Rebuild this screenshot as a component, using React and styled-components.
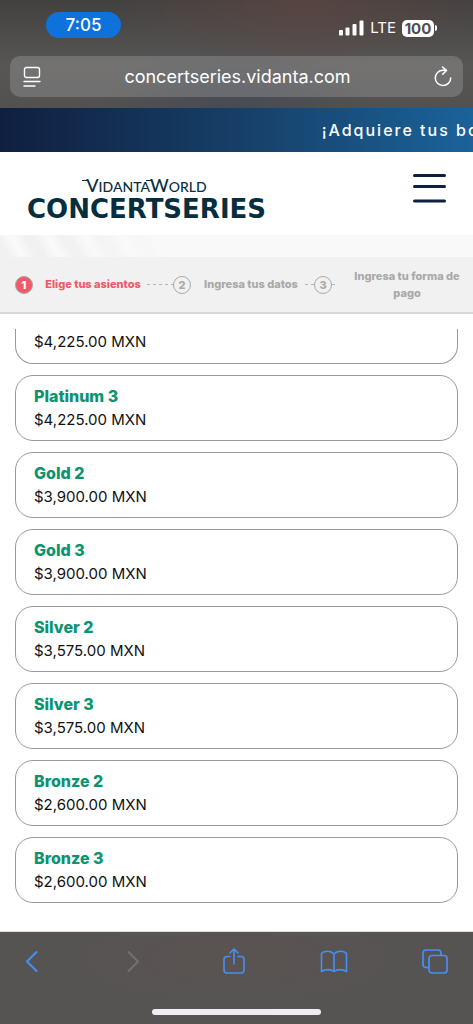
import React from "react";
import styled, { createGlobalStyle } from "styled-components";

const GlobalStyle = createGlobalStyle`
  * {
    box-sizing: border-box;
  }

  body {
    margin: 0;
    background: #ffffff;
    font-family: Inter, "Noto Sans", sans-serif;
  }

  button {
    border: 0;
    padding: 0;
    background: none;
    font: inherit;
    color: inherit;
  }
`;

const Screen = styled.div`
  display: flex;
  flex-direction: column;
  min-height: 100vh;
  overflow: hidden;
`;

const BrowserTop = styled.div`
  padding: 12px 10px 11px;
  color: #ffffff;
  background:
    radial-gradient(ellipse at 65% 0%, rgba(100, 70, 66, 0.6), transparent 45%),
    radial-gradient(ellipse at 50% 100%, rgba(66, 72, 84, 0.7), transparent 40%),
    linear-gradient(#424140, #575655 60%, #525150);
`;

const StatusBar = styled.div`
  display: flex;
  justify-content: space-between;
  align-items: flex-start;
  height: 44px;
  padding: 0 26px 0 36px;
`;

const Clock = styled.div`
  width: 75px;
  border-radius: 13px;
  background: #0d72d9;
  font-size: 17px;
  font-weight: 500;
  line-height: 26px;
  text-align: center;
`;

const Signals = styled.div`
  display: flex;
  align-items: center;
  gap: 6px;
  padding-top: 6px;
  font-size: 15px;
  line-height: 20px;
`;

const Battery = styled.div`
  display: flex;
  align-items: center;
  gap: 1px;
`;

const BatteryLevel = styled.span`
  width: 32px;
  border-radius: 5px;
  background: #ffffff;
  color: #504e4d;
  font-size: 15px;
  font-weight: 700;
  line-height: 17px;
  text-align: center;
`;

const BatteryTip = styled.span`
  width: 2px;
  height: 6px;
  border-radius: 0 2px 2px 0;
  background: #ffffff;
`;

const AddressBar = styled.div`
  display: flex;
  align-items: center;
  justify-content: space-between;
  height: 41px;
  padding: 0 11px 0 13px;
  border-radius: 10px;
  background: rgba(255, 255, 255, 0.17);
`;

const Address = styled.button`
  flex: 1;
  font-size: 18px;
  line-height: 24px;
`;

const IconButton = styled.button`
  display: flex;
`;

const Banner = styled.div`
  height: 44px;
  padding-left: 68%;
  overflow: hidden;
  background: linear-gradient(90deg, #101f40, #163f67 50%, #1b6299);
  color: #ffffff;
  font-size: 16px;
  font-weight: 500;
  line-height: 44px;
  letter-spacing: 2px;
  white-space: nowrap;
`;

const Header = styled.header`
  display: flex;
  justify-content: space-between;
  align-items: flex-start;
  height: 83px;
  padding: 22px 27px 0;
`;

const Logo = styled.a`
  display: flex;
  flex-direction: column;
  align-items: center;
  color: #062e3f;
  text-decoration: none;
`;

const LogoWorld = styled.span`
  font-family: Lato, sans-serif;
  font-size: 14px;
  font-weight: 500;
  line-height: 22px;
`;

// Tall capital with a short bar running into its top left arm
const LogoTall = styled.span`
  position: relative;
  font-size: 18px;

  &::before {
    content: "";
    position: absolute;
    top: 6px;
    left: -4px;
    width: 6px;
    height: 1px;
    background: currentColor;
  }
`;

const LogoSeries = styled.span`
  font-family: "DejaVu Sans", sans-serif;
  font-size: 26px;
  font-weight: 700;
  line-height: 22px;
`;

const Strip = styled.div`
  height: 22px;
  background:
    linear-gradient(90deg, transparent 60px, #f9f9f9 170px),
    repeating-linear-gradient(60deg, #f1f1f1 0 8px, #f9f9f9 18px 22px, #f1f1f1 32px);
`;

const Steps = styled.ol`
  display: flex;
  align-items: center;
  height: 57px;
  margin: 0;
  padding: 0 9px 0 15px;
  border-bottom: 2px solid #d8d8d8;
  background: #f1f1f1;
  list-style: none;
`;

const Step = styled.li`
  display: flex;
  align-items: center;
  flex: ${(p) => p.$grow};
  color: ${(p) => (p.$active ? "#ee5a68" : "#a9a9a9")};
  font-size: 11px;
  font-weight: 800;
  line-height: 17px;
`;

const StepNumber = styled.span`
  flex: none;
  width: 18px;
  height: 18px;
  border: 1px solid #a9a9a9;
  border-radius: 50%;
  background: ${(p) => (p.$active ? "#ee5a68" : "transparent")};
  color: ${(p) => (p.$active ? "#ffffff" : "#a9a9a9")};
  line-height: 16px;
  text-align: center;
`;

const StepLabel = styled.span`
  flex: none;
  width: ${(p) => (p.$last ? "114px" : "108px")};
  margin-left: ${(p) => (p.$last ? "auto" : "6px")};
  text-align: center;
`;

const StepLine = styled.span`
  flex: ${(p) => (p.$short ? "0 0 5px" : "1")};
  height: 1px;
  background: repeating-linear-gradient(90deg, #b5b5b5 0 3px, transparent 3px 6px);
`;

const ZoneList = styled.ul`
  display: flex;
  flex-direction: column;
  flex: 1;
  gap: 11px;
  margin: 0;
  padding: 15px 15px 28px;
  list-style: none;
`;

const ZoneCard = styled.button`
  display: flex;
  flex-direction: column;
  width: 100%;
  padding: ${(p) => (p.$cut ? "1px 18px 9px" : "8px 18px")};
  border: 1px solid #999999;
  border-top-width: ${(p) => (p.$cut ? "0" : "1px")};
  border-radius: ${(p) => (p.$cut ? "0 0 18px 18px" : "18px")};
  text-align: left;
`;

const ZoneName = styled.span`
  color: #0b946f;
  font-size: 16px;
  font-weight: 800;
  line-height: 24px;
`;

const ZonePrice = styled.span`
  color: #111111;
  font-size: 15px;
  line-height: 24px;
`;

const BrowserBottom = styled.div`
  padding: 16px 0 9px;
  border-top: 1px solid #dddddd;
  background: radial-gradient(ellipse at 50% 30%, #5b5352, #555453 60%);
`;

const Toolbar = styled.nav`
  display: flex;
  justify-content: space-between;
  height: 61px;
  padding: 0 24px 0 18px;
`;

const ToolButton = styled.button`
  display: flex;
  justify-content: center;
  width: 28px;
  height: 28px;
  color: ${(p) => (p.$muted ? "#737170" : "#4390f8")};
`;

const HomeBar = styled.div`
  width: 169px;
  height: 6px;
  margin: 0 auto;
  border-radius: 3px;
  background: #efedef;
`;

const zones = [
  { name: "Platinum 3", price: "$4,225.00 MXN" },
  { name: "Gold 2", price: "$3,900.00 MXN" },
  { name: "Gold 3", price: "$3,900.00 MXN" },
  { name: "Silver 2", price: "$3,575.00 MXN" },
  { name: "Silver 3", price: "$3,575.00 MXN" },
  { name: "Bronze 2", price: "$2,600.00 MXN" },
  { name: "Bronze 3", price: "$2,600.00 MXN" }
];

// Line drawing in the colour of its button
function Line({ width, height, stroke = 2, children }) {
  return (
    <svg
      width={width}
      height={height}
      viewBox={`0 0 ${width} ${height}`}
      fill="none"
      stroke="currentColor"
      strokeWidth={stroke}
      strokeLinecap="round"
      strokeLinejoin="round"
      aria-hidden="true"
    >
      {children}
    </svg>
  );
}

function App() {
  return (
    <Screen>
      <GlobalStyle />
      <BrowserTop>
        <StatusBar>
          <Clock>7:05</Clock>
          <Signals>
            <svg width="25" height="16" viewBox="0 0 25 16" fill="#ffffff" aria-hidden="true">
              <rect x="0" y="10" width="4" height="5.5" rx="1" />
              <rect x="6.5" y="7.5" width="4" height="8" rx="1" />
              <rect x="13.5" y="4" width="4" height="11.5" rx="1" />
              <rect x="20.5" y="0.5" width="4" height="15" rx="1" />
            </svg>
            <span>LTE</span>
            <Battery>
              <BatteryLevel>100</BatteryLevel>
              <BatteryTip />
            </Battery>
          </Signals>
        </StatusBar>
        <AddressBar>
          <IconButton aria-label="Page menu">
            <Line width={18} height={22} stroke={1.4}>
              <rect x="1.5" y="1.5" width="15" height="10" rx="2" />
              <path d="M1 15.5h16M1 20h11" />
            </Line>
          </IconButton>
          <Address>concertseries.vidanta.com</Address>
          <IconButton aria-label="Reload">
            <Line width={18} height={22} stroke={1.5}>
              <path d="M9 4.2A7.7 7.7 0 1 0 16.7 12M8.5 1l4 3.4-3.8 3.8M9 4.2h3" />
            </Line>
          </IconButton>
        </AddressBar>
      </BrowserTop>

      <Banner>¡Adquiere tus bo</Banner>

      <Header>
        <Logo href="#">
          <LogoWorld>
            <LogoTall>V</LogoTall>IDANTA<LogoTall>W</LogoTall>ORLD
          </LogoWorld>
          <LogoSeries>CONCERTSERIES</LogoSeries>
        </Logo>
        <IconButton aria-label="Menu">
          <svg width="33" height="30" viewBox="0 0 33 30" fill="#101f42" aria-hidden="true">
            <rect y="0" width="33" height="3" rx="1.5" />
            <rect y="11" width="33" height="3" rx="1.5" />
            <rect y="25.5" width="33" height="3" rx="1.5" />
          </svg>
        </IconButton>
      </Header>
      <Strip />

      <Steps>
        <Step $active $grow="1 1 158px">
          <StepNumber $active>1</StepNumber>
          <StepLabel>Elige tus asientos</StepLabel>
          <StepLine />
        </Step>
        <Step $grow="1 1 141px">
          <StepNumber>2</StepNumber>
          <StepLabel>Ingresa tus datos</StepLabel>
          <StepLine />
        </Step>
        <Step $grow="1 1 150px">
          <StepNumber>3</StepNumber>
          <StepLine $short />
          <StepLabel $last>Ingresa tu forma de pago</StepLabel>
        </Step>
      </Steps>

      <ZoneList>
        <li>
          <ZoneCard $cut>
            <ZonePrice>$4,225.00 MXN</ZonePrice>
          </ZoneCard>
        </li>
        {zones.map((zone) => (
          <li key={zone.name}>
            <ZoneCard>
              <ZoneName>{zone.name}</ZoneName>
              <ZonePrice>{zone.price}</ZonePrice>
            </ZoneCard>
          </li>
        ))}
      </ZoneList>

      <BrowserBottom>
        <Toolbar>
          <ToolButton aria-label="Back">
            <Line width={16} height={28}>
              <path d="M12.5 4L3 13.5l9.5 9.5" />
            </Line>
          </ToolButton>
          <ToolButton aria-label="Forward" $muted disabled>
            <Line width={16} height={28}>
              <path d="M3.5 4L13 13.5 3.5 23" />
            </Line>
          </ToolButton>
          <ToolButton aria-label="Share">
            <Line width={22} height={28} stroke={1.6}>
              <path d="M7 8.5H4a3 3 0 0 0-3 3V22a3 3 0 0 0 3 3h14a3 3 0 0 0 3-3V11.5a3 3 0 0 0-3-3h-3M11 16V1M7 5l4-4 4 4" />
            </Line>
          </ToolButton>
          <ToolButton aria-label="Bookmarks">
            <Line width={28} height={28} stroke={1.6}>
              <path d="M14 6C11 2.5 4.5 2.5 1.5 5.5V23.5C5 21 11 21 14 23.5C17 21 23 21 26.5 23.5V5.5C23.5 2.5 17 2.5 14 6V23.5" />
            </Line>
          </ToolButton>
          <ToolButton aria-label="Tabs">
            <Line width={26} height={28} stroke={1.7}>
              <path d="M6.5 19.5H4a3 3 0 0 1-3-3V5a3 3 0 0 1 3-3h12a3 3 0 0 1 3 3v2" />
              <rect x="7" y="7.5" width="18" height="17.5" rx="3" />
            </Line>
          </ToolButton>
        </Toolbar>
        <HomeBar />
      </BrowserBottom>
    </Screen>
  );
}

export default App;
